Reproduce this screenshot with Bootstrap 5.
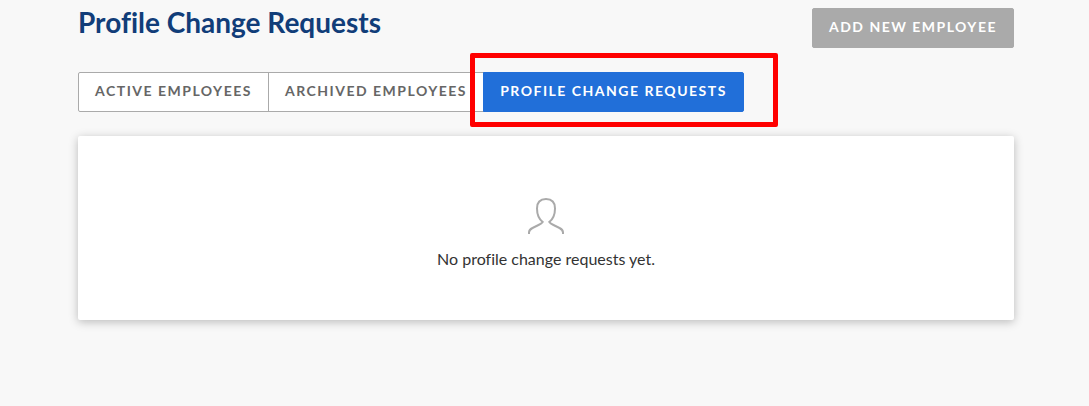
<!DOCTYPE html>
<html lang="en">
<head>
<meta charset="utf-8">
<title>Profile Change Requests</title>
<link href="https://cdn.jsdelivr.net/npm/bootstrap@5.3.0/dist/css/bootstrap.min.css" rel="stylesheet">
<style>
body{background:#f8f8f8;font-family:Lato,sans-serif;color:#333;min-height:100vh;font-variant-ligatures:none}
.page{width:936px;margin-left:78px}
.page-title{font-size:28px;font-weight:700;line-height:34px;color:#113d79;margin-top:5px}
.btn-add,.tabs .btn{font-size:14px;font-weight:700;line-height:20px;letter-spacing:1.5px;height:40px;padding:7px 0 9px;border-radius:2px;white-space:nowrap}
.btn-add{width:202px;margin-top:8px;background:#aaa;color:#fff;border:1px solid #aaa}
.tabs{margin-top:24px}
.tabs .btn{flex:none;background:#fff;color:#666;border-color:#aaa}
.tabs .btn.active{background:#216fd9;border-color:#216fd9;color:#fff}
.t1{width:191px}.t2{width:216px}.t3{width:261px}
.highlight{position:absolute;z-index:5;left:392px;top:-19px;width:308px;height:74px;border:5px solid #f00;border-radius:2px;pointer-events:none}
.panel{height:184px;margin-top:24px;border-radius:2px;box-shadow:0 2px 10px rgba(0,0,0,.25)}
.panel p{font-size:16px;line-height:24px;margin-top:12px}
.person{margin-top:61px}
</style>
<script src="https://cdn.jsdelivr.net/npm/bootstrap@5.3.0/dist/js/bootstrap.bundle.min.js"></script>
</head>
<body>
<main class="page">
  <header class="d-flex justify-content-between align-items-start">
    <h1 class="page-title mb-0">Profile Change Requests</h1>
    <button class="btn btn-add">ADD NEW EMPLOYEE</button>
  </header>
  <div class="tabs position-relative">
    <div class="btn-group d-flex">
      <button class="btn t1">ACTIVE EMPLOYEES</button>
      <button class="btn t2">ARCHIVED EMPLOYEES</button>
      <button class="btn t3 active">PROFILE CHANGE REQUESTS</button>
    </div>
    <div class="highlight"></div>
  </div>
  <section class="panel bg-white d-flex flex-column align-items-center">
    <svg class="person" width="38" height="38" viewBox="0 0 38 38" fill="none" stroke="#aaa" stroke-width="2"><path d="M2 37v-1.500c0-2 1.500-3.500 3.500-4.500l6-3c2-1 3.500-2 4.200-3C12.500 22.500 10 18.500 10 11.500 10 5 13.500 2 19 2s9 3 9 9.500c0 7-2.500 11-5.700 13.500.7 1 2.200 2 4.200 3l6 3c2 1 3.500 2.500 3.500 4.500V37"/></svg>
    <p class="mb-0">No profile change requests yet.</p>
  </section>
</main>
</body>
</html>
